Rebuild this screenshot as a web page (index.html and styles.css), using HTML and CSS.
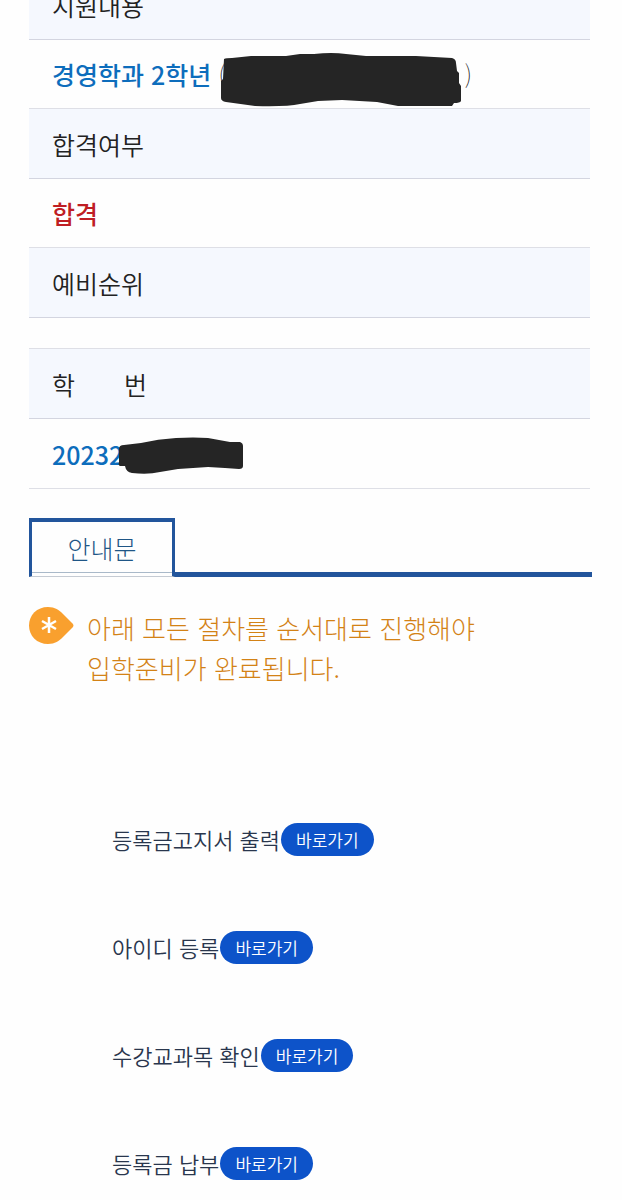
FILE: index.html
```html
<!DOCTYPE html>
<html lang="ko">
<head>
  <meta charset="UTF-8">
  <meta name="viewport" content="width=device-width, initial-scale=1">
  <title>합격자 조회</title>
  <link rel="stylesheet" href="styles.css">
</head>
<body>
  <main class="result">
    <table class="info-table info-apply">
      <tr><th scope="row">지원내용</th></tr>
      <tr>
        <td>
          <strong>경영학과 2학년</strong>
          <span class="masked masked-major">
            <span>(</span><span>)</span>
            <svg class="marker" width="242" height="54" viewBox="0 0 242 54" aria-hidden="true">
              <path d="M4 6 Q6 5 12 5 L31 3 L66 3 L80 1 L94 1 Q112 -1 126 1 L146 3 L196 3 L232 5 Q236 6 236 10 L237 18 L239 20 L239 30 L241 33 L241 48 Q240 50 234 50 L232 53 L178 53 L157 49 L122 47 L98 48 L80 51 Q66 54 35 53 L6 49 Q1 48 1 45 L1 28 L3 26 Z" fill="#252525"/>
            </svg>
          </span>
        </td>
      </tr>
      <tr><th scope="row">합격여부</th></tr>
      <tr><td><strong class="pass">합격</strong></td></tr>
      <tr><th scope="row">예비순위</th></tr>
    </table>

    <table class="info-table info-number">
      <tr><th scope="row"><span class="spread"><span>학</span><span>번</span></span></th></tr>
      <tr>
        <td>
          <span class="masked masked-number">
            <strong>20232</strong>
            <svg class="marker" width="126" height="38" viewBox="0 0 126 38" aria-hidden="true">
              <path d="M1 12 Q1 8 6 8 L23 6 Q40 2 58 1 Q76 0 90 1 L112 5 L122 5 Q125 6 125 9 L125 29 Q125 32 121 32 L107 31 L90 30 L60 32 L42 35 Q30 38 14 36 Q8 35 7 29 L2 29 Q0 28 1 25 Z" fill="#252525"/>
            </svg>
          </span>
        </td>
      </tr>
    </table>

    <nav class="tabs">
      <a href="#guide" class="tab">안내문</a>
    </nav>

    <section id="guide">
      <div class="notice">
        <svg width="45" height="37" viewBox="0 0 45 37" aria-hidden="true">
          <path d="M19 0 C26 0 30 3 34 7 L44 17 Q45 18.500 44 20 L34 30 C30 34 26 37 19 37 C8 37 0 29 0 18.500 S8 0 19 0 Z" fill="#f9a02e"/>
          <path d="M20 10 V26 M13 14 L27 22 M27 14 L13 22" stroke="#fff" stroke-width="2.500" fill="none"/>
        </svg>
        <p>아래 모든 절차를 순서대로 진행해야 입학준비가 완료됩니다.</p>
      </div>

      <ul class="steps">
        <li>등록금고지서 출력 <a href="#bill" class="btn-go">바로가기</a></li>
        <li>아이디 등록 <a href="#account" class="btn-go">바로가기</a></li>
        <li>수강교과목 확인 <a href="#courses" class="btn-go">바로가기</a></li>
        <li>등록금 납부 <a href="#payment" class="btn-go">바로가기</a></li>
      </ul>
    </section>
  </main>
</body>
</html>
```

FILE: styles.css
```css
* {
  box-sizing: border-box;
}
body {
  margin: 0;
  background-color: #fefefe;
  color: #222;
  font-family: "Noto Sans CJK KR", sans-serif;
  font-size: 25px;
}
.result {
  padding: 0 32px 0 29px;
  overflow: hidden;
}
.info-table {
  width: 100%;
  border-collapse: separate;
  border-spacing: 0;
}
.info-table th,
.info-table td {
  height: 70px;
  padding: 0 23px;
  border-bottom: 1px solid #d3d5e0;
  font-weight: 350;
  line-height: 36px;
  text-align: left;
  vertical-align: middle;
}
.info-table th {
  background-color: #f5f8fe;
}
.info-table td {
  border-bottom-color: #dedfe6;
}
.info-table strong {
  color: #0d6dbc;
  font-weight: 500;
}
.info-table .pass {
  color: #bf1e24;
}
/* the first heading is scrolled halfway out of view */
.info-apply {
  margin-top: -30px;
}
.info-apply td {
  height: 69px;
}
.info-number {
  margin-top: 30px;
  border-top: 1px solid #dedfe6;
}
.spread {
  display: flex;
  justify-content: space-between;
  width: 95px;
}
.masked {
  display: inline-flex;
  position: relative;
}
.masked-major {
  justify-content: space-between;
  width: 254px;
  font-weight: 100;
}
.marker {
  position: absolute;
}
.masked-major .marker {
  top: -3px;
  left: 2px;
}
.masked-number .marker {
  top: 1px;
  left: 66px;
}
.tabs {
  display: flex;
  margin: 29px -2px 0 0;
}
.tabs::after {
  content: "";
  flex: 1;
  border-bottom: 5px solid #22559c;
}
.tab {
  width: 146px;
  height: 59px;
  border: 3px solid #22559c;
  border-top-width: 4px;
  border-bottom: 1px solid #c5cbd3;
  box-shadow: inset 0 -3px #fefefe, inset 0 -4px #a9b9c9;
  color: #1f5686;
  font-weight: 200;
  line-height: 52px;
  text-align: center;
  text-decoration: none;
}
.notice {
  display: flex;
  align-items: flex-start;
  gap: 13px;
  margin-top: 30px;
}
.notice svg {
  flex: none;
}
.notice p {
  max-width: 400px;
  margin: 1px 0 0;
  color: #d38216;
  font-size: 26px;
  font-weight: 300;
  line-height: 40px;
  word-break: keep-all;
}
.steps {
  margin: 97px 0 0;
  padding: 0 0 0 83px;
  list-style: none;
  color: #29364d;
  font-size: 22px;
  font-weight: 350;
}
.steps li {
  display: flex;
  align-items: center;
  gap: 1px;
  height: 108px;
}
.btn-go {
  padding: 0 15px;
  border-radius: 17px;
  background-color: #0d53c9;
  color: #fff;
  font-size: 17px;
  line-height: 33px;
  text-decoration: none;
}
```
